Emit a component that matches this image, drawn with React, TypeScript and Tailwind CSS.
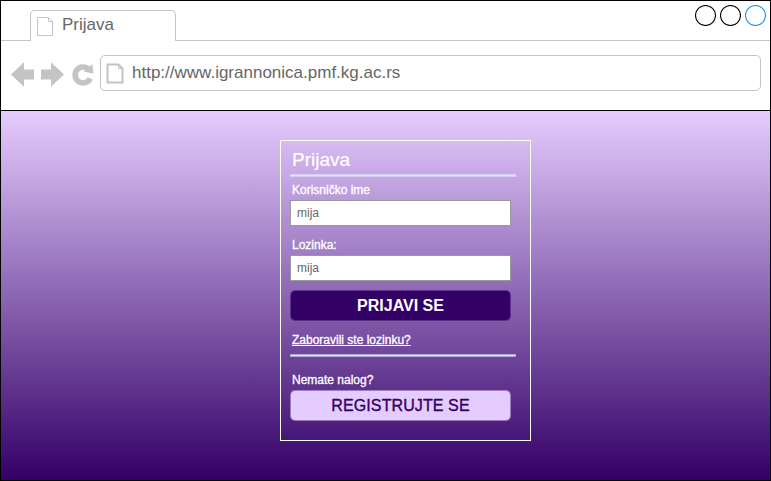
import React from "react";

function DocIcon({ strokeWidth, className }: { strokeWidth: number; className: string }) {
  return (
    <svg className={className} viewBox="0 0 18 21" fill="none" stroke="#c4c4c4" strokeWidth={strokeWidth}>
      <path d="M1.5 1.5H12.5L16.5 5.5V19.5H1.5Z" />
      <path d="M12.5 1.5V5.5H16.5" strokeWidth={1} />
    </svg>
  );
}

function WindowButtons() {
  return (
    <div className="mt-[4px] mr-[4px] ml-auto flex gap-[4px]">
      {["#000000", "#000000", "#1591ff"].map((color, i) => (
        <svg key={i} className="h-[21px] w-[21px]" viewBox="0 0 21 21" fill="none">
          <circle cx="10.5" cy="10.5" r="10" stroke={color} strokeWidth="1.1" />
        </svg>
      ))}
    </div>
  );
}

function TabBar() {
  return (
    <div className="flex h-[40px] shrink-0">
      <div className="w-[29px] border-b border-[#c4c4c4]" />
      <div className="mt-[9px] flex w-[146px] rounded-t-[5px] border border-b-0 border-[#c4c4c4]">
        <DocIcon strokeWidth={1} className="mt-[5px] ml-[5px] h-[21px] w-[18px]" />
        <span className="ml-[8px] text-[17px] leading-[27px]">Prijava</span>
      </div>
      <div className="flex flex-1 border-b border-[#c4c4c4]">
        <WindowButtons />
      </div>
    </div>
  );
}

function Toolbar() {
  return (
    <div className="flex h-[69px] shrink-0 pr-[9px]">
      <svg className="h-[69px] w-[98px] shrink-0" viewBox="1 41 98 69" fill="#c4c4c4">
        <path d="M11 74.5L24 62.3V69.5H34V79.5H24V86.7Z" />
        <path d="M64 74.5L51 62.3V69.5H41V79.5H51V86.7Z" />
        <path d="M90.3 78.5A8 8 0 1 1 88 68.6" fill="none" stroke="#c4c4c4" strokeWidth="5.6" />
        <path d="M92.2 64L93.6 73.8L83.5 71.6Z" />
      </svg>
      <div className="mt-[14px] ml-[1px] flex h-[36px] flex-1 items-start rounded-[5px] border border-[#c4c4c4]">
        <DocIcon strokeWidth={2} className="mt-[7px] ml-[5px] h-[21px] w-[18px]" />
        <span className="ml-[8px] text-[17px] leading-[33px]">http://www.igrannonica.pmf.kg.ac.rs</span>
      </div>
    </div>
  );
}

function Divider() {
  return <div className="h-[3px] w-[226px] border border-[#dae8fc]/60 bg-[#dae8fc] bg-clip-padding" />;
}

function Field({ label, value }: { label: string; value: string }) {
  return (
    <div className="h-[55px] w-[221px]">
      <div className="h-[23px] pl-[2px] text-[12px] leading-[27px] [-webkit-text-stroke:0.3px]">{label}</div>
      <div className="h-[26px] border border-[#999999] bg-white pl-[6px] text-[12px] leading-[24px] text-[#666666]">
        {value}
      </div>
    </div>
  );
}

function LoginCard() {
  return (
    <div className="ml-[279px] h-[301px] w-[251px] border border-white pl-[9px] text-white">
      <div className="h-[33px] pl-[2px] text-[19px] leading-[37px] [-webkit-text-stroke:0.2px]">Prijava</div>
      <Divider />
      <Field label="Korisničko ime" value="mija" />
      <Field label="Lozinka:" value="mija" />
      <button className="mt-[3px] block h-[31px] w-[221px] rounded-[5px] border border-[#330066]/50 bg-[#330066] bg-clip-padding text-center text-[16px] leading-[28px] font-bold">
        PRIJAVI SE
      </button>
      <a className="block h-[33px] pl-[2px] text-[12px] leading-[39px] underline [-webkit-text-stroke:0.3px]">
        Zaboravili ste lozinku?
      </a>
      <Divider />
      <div className="h-[33px] pt-[10px] pl-[2px] text-[12px] leading-[26px] [-webkit-text-stroke:0.3px]">
        Nemate nalog?
      </div>
      <button className="block h-[31px] w-[221px] rounded-[5px] border border-[#e5ccff]/50 bg-[#e5ccff] bg-clip-padding text-center text-[16px] leading-[28px] tracking-[0.1px] text-[#330066] [-webkit-text-stroke:0.35px]">
        REGISTRUJTE SE
      </button>
    </div>
  );
}

export default function App() {
  return (
    <div className="flex h-[481px] w-[771px] flex-col border border-black bg-white font-['Liberation_Sans',Arial,sans-serif] text-[#666666]">
      <TabBar />
      <Toolbar />
      <div className="flex-1 border-t border-black bg-linear-to-b/srgb from-[#e5ccff] to-[#330066] pt-[29px]">
        <LoginCard />
      </div>
    </div>
  );
}
